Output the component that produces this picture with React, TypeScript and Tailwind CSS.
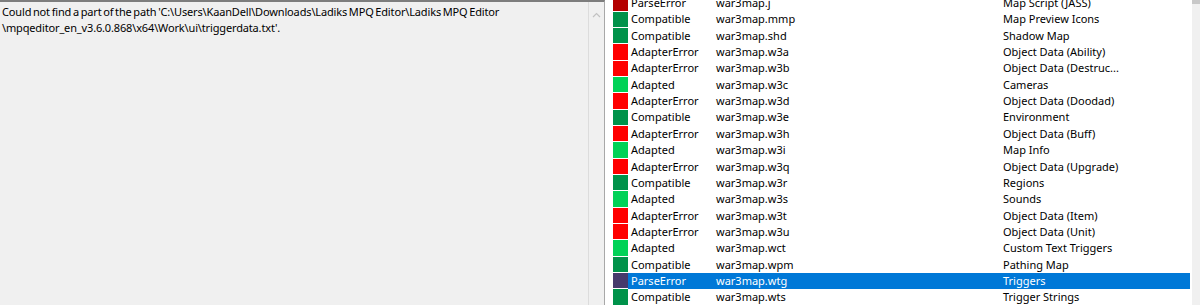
import React from 'react'

type Row = { status: string; file: string; desc: string }

const rows: Row[] = [
  { status: 'ParseError', file: 'war3map.j', desc: 'Map Script (JASS)' },
  { status: 'Compatible', file: 'war3map.mmp', desc: 'Map Preview Icons' },
  { status: 'Compatible', file: 'war3map.shd', desc: 'Shadow Map' },
  { status: 'AdapterError', file: 'war3map.w3a', desc: 'Object Data (Ability)' },
  { status: 'AdapterError', file: 'war3map.w3b', desc: 'Object Data (Destruc...' },
  { status: 'Adapted', file: 'war3map.w3c', desc: 'Cameras' },
  { status: 'AdapterError', file: 'war3map.w3d', desc: 'Object Data (Doodad)' },
  { status: 'Compatible', file: 'war3map.w3e', desc: 'Environment' },
  { status: 'AdapterError', file: 'war3map.w3h', desc: 'Object Data (Buff)' },
  { status: 'Adapted', file: 'war3map.w3i', desc: 'Map Info' },
  { status: 'AdapterError', file: 'war3map.w3q', desc: 'Object Data (Upgrade)' },
  { status: 'Compatible', file: 'war3map.w3r', desc: 'Regions' },
  { status: 'Adapted', file: 'war3map.w3s', desc: 'Sounds' },
  { status: 'AdapterError', file: 'war3map.w3t', desc: 'Object Data (Item)' },
  { status: 'AdapterError', file: 'war3map.w3u', desc: 'Object Data (Unit)' },
  { status: 'Adapted', file: 'war3map.wct', desc: 'Custom Text Triggers' },
  { status: 'Compatible', file: 'war3map.wpm', desc: 'Pathing Map' },
  { status: 'ParseError', file: 'war3map.wtg', desc: 'Triggers' },
  { status: 'Compatible', file: 'war3map.wts', desc: 'Trigger Strings' },
]

const swatch: Record<string, string> = {
  ParseError: 'bg-[#b40000]',
  Compatible: 'bg-[#00924a]',
  AdapterError: 'bg-[#ff0000]',
  Adapted: 'bg-[#00d257]',
}

const font = { fontFamily: '"Noto Sans", "Open Sans", sans-serif' }

const App = () => {
  const selected = 17
  return (
    <div
      className="flex w-[1200px] h-[305px] overflow-hidden bg-white text-[11px] text-black"
      style={font}
    >
      <div className="flex w-[605px] shrink-0 bg-[#f0f0f0] border-t-2 border-[#7d7d7d] border-r border-r-[#a8a8a8]">
        <div className="flex-1 pl-[2px] pt-[2px] leading-[16px] tracking-[-0.15px] [word-spacing:-1px]">
          <p>
            Could not find a part of the path 'C:\Users\KaanDell\Downloads\Ladiks MPQ Editor\Ladiks MPQ Editor
          </p>
          <p>\mpqeditor_en_v3.6.0.868\x64\Work\ui\triggerdata.txt'.</p>
        </div>
        <div className="w-[16px] border-l border-[#dcdcdc] flex justify-center pt-[10px]">
          <svg width="9" height="6" viewBox="0 0 9 6">
            <path d="M1 5 L4.5 1.5 L8 5" stroke="#c2c2c2" strokeWidth="1.2" fill="none" />
          </svg>
        </div>
      </div>
      <div className="flex-1 flex">
        <div className="flex-1 pl-[8px] pr-[2px]">
          <div className="mt-[-4.85px]">
            {rows.map((row, i) => {
              const sel = i === selected
              return (
                <div key={i} className="flex h-[16.35px] items-center">
                  <div
                    className={`w-[15px] h-full shrink-0 border-b border-white ${
                      sel ? 'bg-[#463a6c]' : swatch[row.status]
                    }`}
                  />
                  <div
                    className={`flex flex-1 h-full items-center ${
                      sel ? 'bg-[#0078d7] text-white' : ''
                    }`}
                  >
                    <span className="w-[88px] pl-[3px] shrink-0">{row.status}</span>
                    <span className="w-[287px] shrink-0">{row.file}</span>
                    <span>{row.desc}</span>
                  </div>
                </div>
              )
            })}
          </div>
        </div>
        <div className="w-[8px] bg-[#f0f0f0]">
          <div className="h-[4px] bg-[#c8c8c8]" />
        </div>
      </div>
    </div>
  )
}

export default App
